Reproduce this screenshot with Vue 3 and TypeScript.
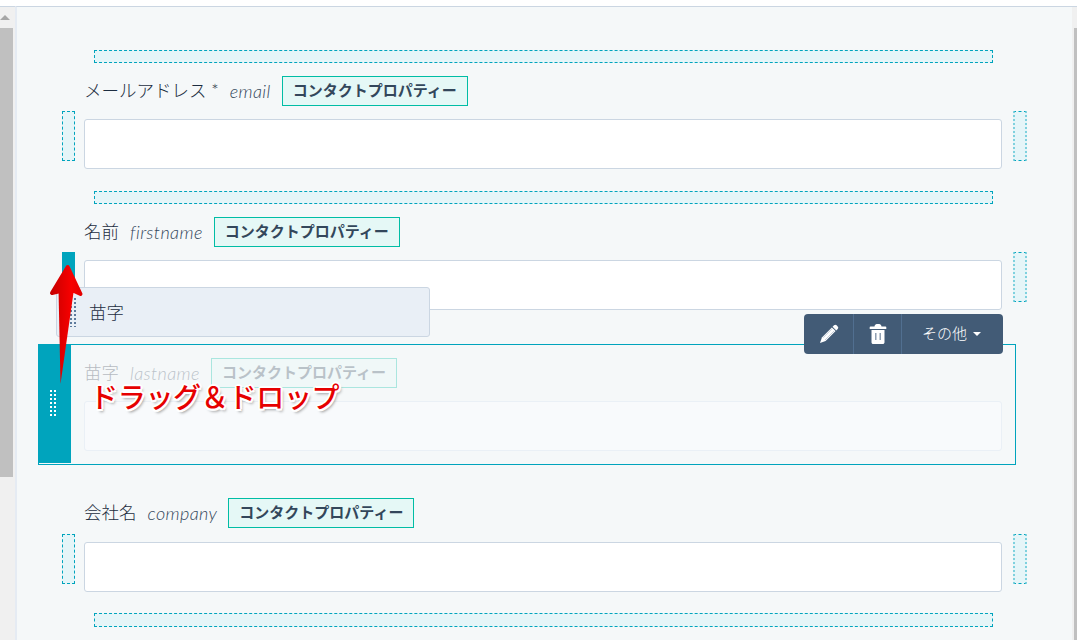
<script setup lang="ts">
interface Field { label: string; name: string }
const topFields: Field[] = [
  { label: 'メールアドレス *', name: 'email' },
  { label: '名前', name: 'firstname' },
]
const tag = 'コンタクトプロパティー'
</script>

<template>
  <div class="page">
    <div class="scroll left">
      <div class="scroll-cap"><span class="up"></span></div>
      <div class="thumb"></div>
    </div>
    <main class="panel">
      <section v-for="(f, i) in topFields" :key="f.name" class="field">
        <div class="drop-top"></div>
        <div class="label-row">
          <span class="jp">{{ f.label }}</span>
          <em class="api">{{ f.name }}</em>
          <span class="tag">{{ tag }}</span>
        </div>
        <div class="input-row">
          <div class="drop-side" :class="{ active: i === 1 }"></div>
          <div class="input"></div>
          <div class="drop-side right"></div>
        </div>
      </section>

      <section class="selected">
        <div class="handle"><span class="dots"></span></div>
        <div class="selected-body">
          <div class="label-row faded">
            <span class="jp">苗字</span>
            <em class="api">lastname</em>
            <span class="tag">{{ tag }}</span>
          </div>
          <div class="input faded-input"></div>
        </div>
      </section>

      <section class="field company">
        <div class="label-row">
          <span class="jp">会社名</span>
          <em class="api">company</em>
          <span class="tag">{{ tag }}</span>
        </div>
        <div class="input-row">
          <div class="drop-side"></div>
          <div class="input"></div>
          <div class="drop-side right"></div>
        </div>
      </section>
      <div class="drop-top last"></div>
    </main>
    <div class="scroll right">
      <div class="scroll-cap"></div>
      <div class="thumb"></div>
    </div>

    <div class="ghost"><span class="ghost-dots"></span>苗字</div>

    <div class="toolbar">
      <button class="tool icon" aria-label="edit">
        <svg width="20" height="20" viewBox="0 0 20 20">
          <path d="M15 1.300a1.900 1.900 0 0 1 2.600 0l1.100 1.100a1.900 1.900 0 0 1 0 2.600L17.300 6.400 13.600 2.700z" fill="#fff"/>
          <path d="M12.900 3.400 16.600 7.100 6.600 17.100 1 19 2.900 13.400z" fill="#fff"/>
          <path d="M4 13.800 13.300 4.500M6 16 15.300 6.700" stroke="#aebccb" stroke-width="0.7" fill="none"/>
        </svg>
      </button>
      <button class="tool icon" aria-label="delete">
        <svg width="18" height="22" viewBox="0 0 18 22">
          <path d="M5.500 3.500C5.700 1.600 7 1 9 1s3.300.6 3.500 2.500H16.500a.8.8 0 0 1 .8.800V6H.7V4.300a.8.8 0 0 1 .8-.8z" fill="#fff"/>
          <path d="M2.500 7h13v12.200c0 1.200-.7 1.800-1.800 1.800H4.300c-1.100 0-1.800-.6-1.800-1.800z" fill="#fff"/>
          <path d="M6.800 10v7M11.200 10v7" stroke="#7d8fa5" stroke-width="1.300" fill="none"/>
        </svg>
      </button>
      <button class="tool more"><span class="more-text">その他</span><span class="caret"></span></button>
    </div>

    <svg class="arrow" width="50" height="135" viewBox="0 0 50 135">
      <defs>
        <linearGradient id="red" gradientUnits="userSpaceOnUse" x1="5" x2="38" y1="0" y2="0">
          <stop offset="0" stop-color="#c40000"/>
          <stop offset="0.35" stop-color="#e00000"/>
          <stop offset="0.65" stop-color="#f80000"/>
          <stop offset="1" stop-color="#e00000"/>
        </linearGradient>
      </defs>
      <path d="M22.700 12 7 38 13.500 36.500 14 36 29 36 35.500 39Z" fill="url(#red)" stroke="url(#red)" stroke-width="4" stroke-linejoin="round"/>
      <path d="M13.500 34 15.500 129 29 34Z" fill="url(#red)"/>
    </svg>
    <div class="caption">ドラッグ＆ドロップ</div>
  </div>
</template>

<style>
html, body { margin: 0; background: #fff; }
</style>

<style scoped>
.page {
  position: relative;
  display: flex;
  width: 1077px;
  height: 640px;
  overflow: hidden;
  box-sizing: border-box;
  padding-top: 6px;
  font-family: Lato, "Noto Sans CJK JP", sans-serif;
  color: #33475b;
}
.scroll {
  flex: none;
  display: flex;
  flex-direction: column;
  border-top: 1px solid #cbd6e2;
  background: #f0f0f0;
}
.scroll.left { width: 15px; }
.scroll.left .thumb { width: 13px; height: 449px; }
.scroll.right { width: 5px; align-items: flex-end; }
.scroll.right .thumb { width: 3px; height: 612px; }
.scroll-cap {
  height: 21px;
  display: flex;
  justify-content: flex-start;
  align-items: center;
  width: 13px;
}
.up {
  width: 0;
  height: 0;
  border-left: 5px solid transparent;
  border-right: 5px solid transparent;
  border-bottom: 5px solid #a6a6a6;
}
.thumb { background: #c0c0c0; }
.panel {
  flex: 1;
  min-width: 0;
  box-sizing: border-box;
  border-top: 1px solid #cbd6e2;
  border-left: 2px solid #e5ebf3;
  background: #f5f8f9;
  padding: 43px 0 0 45px;
}
.field { width: 965px; margin-bottom: 22px; }
.field:nth-of-type(2) { margin-bottom: 0; }
.drop-top {
  box-sizing: border-box;
  width: 899px;
  height: 13px;
  margin: 0 0 13px 32px;
  border: 1px dashed #00a4bd;
  background: #e5f5f8;
}
.label-row {
  display: flex;
  align-items: center;
  height: 30px;
  margin-left: 22px;
  font-size: 17.5px;
  font-weight: 300;
}
.jp { color: #1c2d40; padding-bottom: 3px; }
.api {
  margin-left: 11px;
  padding-bottom: 1px;
  font-size: 18px;
  font-weight: 300;
  font-style: italic;
  letter-spacing: 0.4px;
  color: #33475b;
}
.tag {
  box-sizing: border-box;
  margin-left: 11px;
  height: 30px;
  padding: 0 10px;
  border: 1px solid #00bda5;
  background: #e5f8f6;
  font-size: 15px;
  font-weight: 700;
  line-height: 26px;
  color: #33475b;
}
.input-row {
  display: flex;
  align-items: flex-start;
  margin-top: 5px;
}
.company .input-row { margin-top: 6px; }
.drop-side {
  flex: none;
  box-sizing: border-box;
  width: 13px;
  height: 50px;
  border: 1px dashed #00a4bd;
  background: #e5f5f8;
}
.drop-side.right { width: 14px; margin-left: 11px; border-left: 2px dotted #7fd1de; border-right: 2px dotted #7fd1de; }
.drop-side.active { background: #00a4bd; }
.input {
  box-sizing: border-box;
  width: 918px;
  height: 50px;
  border: 1px solid #cbd6e2;
  border-radius: 3px;
  background: #fff;
}
.input-row .input { margin: 8px 0 0 9px; }
.selected {
  box-sizing: border-box;
  display: flex;
  width: 978px;
  height: 121px;
  margin: 34px 0 33px -24px;
  border: 1px solid #00a4bd;
}
.handle {
  flex: none;
  width: 33px;
  height: 119px;
  margin: -1px 0 0 -1px;
  background: #00a4bd;
  display: flex;
  align-items: center;
  justify-content: center;
  padding-right: 4px;
  box-sizing: border-box;
}
.dots {
  width: 6px;
  height: 28px;
  background-image: conic-gradient(#fff 0 25%, transparent 0);
  background-size: 4px 4px;
  background-position: -2px 0;
}
.selected-body { padding: 13px 0 0 13px; }
.selected-body .label-row { margin-left: 0; }
.faded { opacity: 0.3; }
.faded-input { margin-top: 13px; background: #f8fafc; border-color: #eaf0f6; }
.company { margin-bottom: 21px; }
.drop-top.last { height: 14px; }
.ghost {
  position: absolute;
  left: 56px;
  top: 287px;
  box-sizing: border-box;
  width: 374px;
  height: 50px;
  padding-left: 32px;
  border: 1px solid #cbd6e2;
  border-radius: 3px;
  background: #e9eff6;
  font-size: 17.5px;
  font-weight: 300;
  line-height: 49px;
  color: #1c2d40;
}
.ghost-dots {
  position: absolute;
  left: 13px;
  top: 10px;
  width: 6px;
  height: 29px;
  background-image: conic-gradient(#5d7a9c 0 25%, transparent 0);
  background-size: 4px 4px;
  background-position: -2px 0;
}
.toolbar {
  position: absolute;
  left: 804px;
  top: 314px;
  display: flex;
  width: 199px;
  height: 40px;
  border-radius: 4px;
  overflow: hidden;
  background: #425b76;
}
.tool {
  display: flex;
  align-items: center;
  justify-content: center;
  padding: 0;
  border: 0;
  background: none;
  color: #fff;
  font: 300 15px "Noto Sans CJK JP", sans-serif;
}
.tool.icon { border-right: 1px solid #516f90; }
.tool.icon:nth-child(1) { width: 50px; }
.tool.icon:nth-child(2) { width: 48px; }
.tool.more { flex: 1; padding-right: 2px; }
.more-text { padding-bottom: 4px; }
.caret {
  margin: 0 0 1px 6px;
  border-left: 4px solid transparent;
  border-right: 4px solid transparent;
  border-top: 4px solid #fff;
}
.arrow { position: absolute; left: 45px; top: 255px; }
.caption {
  position: absolute;
  left: 90px;
  top: 377px;
  font: 500 28px "Noto Sans CJK JP", sans-serif;
  line-height: 38px;
  letter-spacing: -0.3px;
  color: #e60000;
  white-space: nowrap;
  text-shadow: 2px 0 0 #fff, -2px 0 0 #fff, 0 2px 0 #fff, 0 -2px 0 #fff, 1.5px 1.5px 0 #fff, -1.5px 1.5px 0 #fff, 1.5px -1.5px 0 #fff, -1.5px -1.5px 0 #fff, 2px 3px 3px rgba(0,0,0,.4);
}
</style>
